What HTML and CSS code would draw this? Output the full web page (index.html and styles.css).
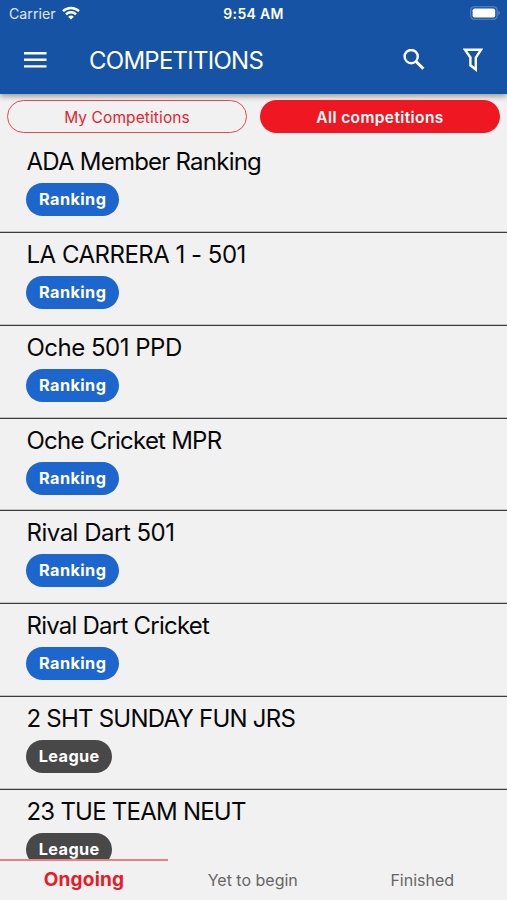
FILE: index.html
```html
<!DOCTYPE html>
<html lang="en">
<head>
<meta charset="utf-8">
<title>Competitions</title>
<link rel="stylesheet" href="styles.css">
</head>
<body>
<div class="app">
  <header class="header">
    <div class="status">
      <div class="carrier"><span>Carrier</span>
        <svg class="wifi" width="18" height="14" viewBox="0 0 18 14" fill="none" stroke="#fff" stroke-width="2.5"><path d="M1 5.2a11.4 11.4 0 0 1 16 0M4 8.4a7.1 7.1 0 0 1 10 0"/><path d="M9 13.6 6.2 10.8a4 4 0 0 1 5.6 0z" fill="#fff" stroke="none"/></svg>
      </div>
      <div class="time">9:54 AM</div>
      <svg class="battery" width="30" height="14" viewBox="0 0 30 14"><rect x=".7" y=".7" width="26.4" height="12.6" rx="3.6" fill="none" stroke="#6288c2" stroke-width="1.1"/><rect x="2.6" y="2.5" width="22.6" height="9" rx="1.8" fill="#fff"/><path d="M28.4 4.8q1.5.6 1.5 2.2t-1.5 2.2z" fill="#6288c2"/></svg>
    </div>
    <div class="toolbar">
      <svg class="menu" width="23" height="16" viewBox="0 0 23 16" fill="#fff"><path d="M0 0h22.5v2.4H0zM0 6.6h22.5V9H0zM0 13.2h22.5v2.4H0z"/></svg>
      <h1 class="heading">COMPETITIONS</h1>
      <svg class="search" width="22" height="22" viewBox="0 0 22 22" fill="none" stroke="#fff" stroke-width="2.4"><circle cx="8.2" cy="7.6" r="6.6"/><path d="M12.8 12.2l7.6 7.6" stroke-width="3"/></svg>
      <svg class="filter" width="20" height="24" viewBox="0 0 20 24" fill="none" stroke="#fff" stroke-width="2.4"><path d="M1.9 1.7h16.2l-5.3 7.8v12L7.4 17.3V9.5z"/></svg>
    </div>
  </header>
  <div class="segments">
    <button class="segment segment-mine">My Competitions</button>
    <button class="segment segment-all">All competitions</button>
  </div>
  <main class="list">
    <section class="item"><h2 class="name">ADA Member Ranking</h2><span class="tag">Ranking</span></section>
    <section class="item"><h2 class="name name-numeric">LA CARRERA 1 - 501</h2><span class="tag">Ranking</span></section>
    <section class="item"><h2 class="name name-numeric">Oche 501 PPD</h2><span class="tag">Ranking</span></section>
    <section class="item"><h2 class="name">Oche Cricket MPR</h2><span class="tag">Ranking</span></section>
    <section class="item"><h2 class="name name-numeric">Rival Dart 501</h2><span class="tag">Ranking</span></section>
    <section class="item"><h2 class="name">Rival Dart Cricket</h2><span class="tag">Ranking</span></section>
    <section class="item"><h2 class="name">2 SHT SUNDAY FUN JRS</h2><span class="tag tag-league">League</span></section>
    <section class="item"><h2 class="name">23 TUE TEAM NEUT</h2><span class="tag tag-league">League</span></section>
  </main>
  <nav class="tabs">
    <a class="tab tab-active">Ongoing</a>
    <a class="tab">Yet to begin</a>
    <a class="tab">Finished</a>
  </nav>
</div>
</body>
</html>
```
FILE: styles.css
```css
* { box-sizing: border-box; }
body { margin: 0; font-family: Inter, "Liberation Sans", sans-serif; background: #f1f1f1; }
.app { height: 900px; display: flex; flex-direction: column; overflow: hidden; }
.header { flex: none; height: 94px; background: #1753a4; color: #fff; box-shadow: 0 2px 6px rgba(0, 0, 0, .4); }
.status { height: 27px; display: grid; grid-template-columns: 1fr auto 1fr; align-items: center; padding: 0 9px 0 9px; }
.carrier { display: flex; align-items: center; gap: 6px; font-size: 14.2px; color: #dfe8f5; }
.wifi { margin-top: -2px; }
.time { font-size: 14px; font-weight: 600; letter-spacing: .3px; }
.battery { justify-self: end; margin: -1px -2px 0 0; }
.toolbar { height: 66px; display: flex; align-items: center; padding: 0 24px; }
.heading { margin: 0 auto 0 42px; font-size: 24px; font-weight: 400; letter-spacing: -.75px; }
.search { margin-right: 38px; }
.segments { flex: none; display: grid; grid-template-columns: 1fr 1fr; gap: 13px; padding: 6.4px 7px 0; height: 46px; }
.segment { height: 33px; padding: 1px 0 0; border-radius: 17px; font: 400 15.5px Inter, sans-serif; letter-spacing: .1px; }
.segment-mine { border: 1.4px solid #e04a50; background: transparent; color: #df2630; }
.segment-all { border: 0; background: #ef1822; color: #fff; font-weight: 600; letter-spacing: .4px; }
.list { flex: 1; min-height: 0; overflow: hidden; }
.item { height: 92.85px; padding: 7px 26px 0; border-bottom: 1px solid #3c3c3c; box-shadow: inset 0 -1px #c4c4c4; }
.name { margin: 0; height: 36.1px; line-height: 30px; font-size: 24px; font-weight: 400; letter-spacing: -.77px; color: #080808; white-space: nowrap; text-indent: .5px; }
.name-numeric { letter-spacing: -.5px; }
.tag { display: block; width: 93px; height: 33px; border-radius: 17px; background: #1c66cd; color: #fff; font-size: 16.3px; font-weight: 700; line-height: 33px; text-align: center; letter-spacing: .4px; text-indent: .4px; }
.tag-league { width: 86px; background: #484848; letter-spacing: .35px; }
.tabs { flex: none; height: 41px; display: grid; grid-template-columns: 168px 1fr 1fr; background: #f1f1f1; }
.tab { display: flex; align-items: center; justify-content: center; border-top: 2px solid transparent; padding-bottom: 2px; color: #666; font-size: 16px; }
.tab-active { border-top-color: #e58286; color: #e61c2a; font-size: 19px; font-weight: 700; letter-spacing: .2px; }
```
